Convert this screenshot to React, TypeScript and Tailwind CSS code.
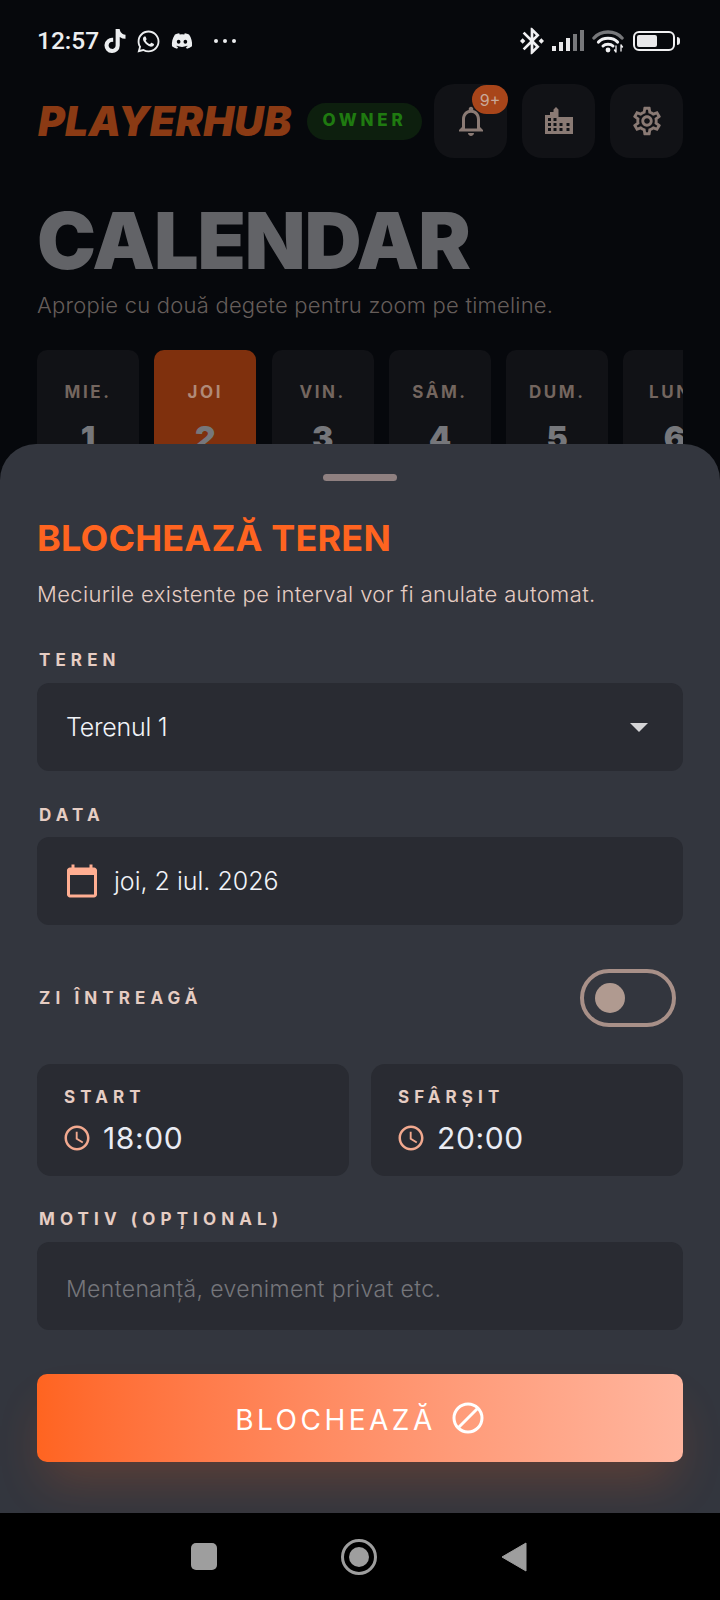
import { FaDiscord, FaTiktok, FaWhatsapp } from "react-icons/fa";
import {
  MdBluetoothConnected,
  MdCalendarToday,
  MdOutlineAccessTime,
  MdOutlineNotifications,
  MdOutlineSettings,
} from "react-icons/md";

const days = [
  { name: "MIE.", num: "1" },
  { name: "JOI", num: "2", active: true },
  { name: "VIN.", num: "3" },
  { name: "SÂM.", num: "4" },
  { name: "DUM.", num: "5" },
  { name: "LUN.", num: "6" },
];

function SignalIcon() {
  return (
    <svg width="32" height="22" viewBox="0 0 32 22">
      <rect x="0" y="16" width="4" height="5" fill="#e8e8ea" />
      <rect x="7" y="12" width="4" height="9" fill="#e8e8ea" />
      <rect x="14" y="8" width="4" height="13" fill="#e8e8ea" />
      <rect x="21" y="4" width="4" height="17" fill="#77787b" />
      <rect x="28" y="0" width="4" height="21" fill="#77787b" />
    </svg>
  );
}

function WifiIcon() {
  return (
    <svg width="32" height="24" viewBox="0 0 32 24" fill="none" strokeLinecap="round">
      <path d="M2 9 C 9 1, 23 1, 30 9" stroke="#77787b" strokeWidth="3.4" />
      <path d="M6.500 13 C 11 8, 21 8, 25.500 13" stroke="#f0f0f2" strokeWidth="3.2" />
      <path d="M11 17 C 13.500 14.500, 18.500 14.500, 21 17" stroke="#f0f0f2" strokeWidth="3" />
      <circle cx="16" cy="21" r="2.4" fill="#f0f0f2" />
      <path d="M24 17v6M22.500 21l1.500 2M29 16v6M29 16l1.500 2" stroke="#f0f0f2" strokeWidth="1.3" />
    </svg>
  );
}

function BatteryIcon() {
  return (
    <div className="flex items-center gap-[2px]">
      <div className="flex h-[20px] w-[42px] rounded-[6px] border-2 border-[#f0f0f2] p-[2px]">
        <div className="w-[20px] rounded-[2px] bg-[#e8e8ea]" />
      </div>
      <div className="h-[8px] w-[3px] rounded-r-sm bg-[#e8e8ea]" />
    </div>
  );
}

function CityIcon() {
  return (
    <svg width="30" height="30" viewBox="0 0 30 30">
      <path
        fillRule="evenodd"
        fill="#8a7a74"
        d="M1 28V9h5V6h3.500V3.500L12 1l2.500 2.500V11H29v17H1ZM4 12v3h3v-3H4Zm5.500 0v3h3v-3h-3Zm-5.500 5v3h3v-3H4Zm5.500 0v3h3v-3h-3Zm-5.500 5v3h3v-3H4Zm5.500 0v3h3v-3h-3Zm6-5v3h3v-3h-3Zm7 0v3h3v-3h-3Zm-7 5v3h3v-3h-3Zm7 0v3h3v-3h-3Z"
      />
    </svg>
  );
}

function BlockIcon() {
  return (
    <svg width="34" height="34" viewBox="0 0 34 34" fill="none" stroke="#fff" strokeWidth="3">
      <circle cx="17" cy="17" r="14" />
      <path d="M27 7 7 27" />
    </svg>
  );
}

function HeaderButton({ children }: { children: React.ReactNode }) {
  return (
    <div className="relative flex h-[74px] w-[73px] items-center justify-center rounded-[20px] bg-[#111216]">
      {children}
    </div>
  );
}

function FieldLabel({ text, className }: { text: string; className?: string }) {
  return (
    <div
      className={
        "text-[17px] leading-[20px] font-bold tracking-[0.3em] whitespace-nowrap text-[#e6cdc3] " +
        (className ?? "")
      }
    >
      {text}
    </div>
  );
}

function TimeCard({ label, value }: { label: string; value: string }) {
  return (
    <div className="flex h-[112px] flex-1 flex-col rounded-[14px] bg-[#292b32] pt-[23px] pl-[27px]">
      <FieldLabel text={label} />
      <div className="mt-[11px] flex items-center gap-[11px]">
        <MdOutlineAccessTime size={30} color="#f2a98f" className="-ml-[2px]" />
        <span className="text-[30px] leading-[40px] font-normal tracking-[0.02em] text-[#e9ecf4]">
          {value}
        </span>
      </div>
    </div>
  );
}

export default function App() {
  return (
    <div className="flex h-[1600px] w-[720px] flex-col overflow-hidden bg-black font-[Inter,sans-serif]">
      <div className="relative flex-1 overflow-hidden bg-[#06080c]">
        {/* status bar */}
        <div className="flex h-[84px] items-start justify-between pt-[25px] pr-[40px] pl-[37px]">
          <div className="flex h-[32px] items-center text-[#eceef0]">
            <span className="font-[Roboto,sans-serif] text-[24.5px] font-medium">12:57</span>
            <FaTiktok size={24} className="ml-[4px]" />
            <FaWhatsapp size={25} className="ml-[9px]" />
            <FaDiscord size={22} className="ml-[10px]" />
            <div className="ml-[21px] flex gap-[5px]">
              <span className="h-[4px] w-[4px] rounded-full bg-[#eceef0]" />
              <span className="h-[4px] w-[4px] rounded-full bg-[#eceef0]" />
              <span className="h-[4px] w-[4px] rounded-full bg-[#eceef0]" />
            </div>
          </div>
          <div className="flex h-[32px] items-center">
            <MdBluetoothConnected size={32} color="#f0f0f2" />
            <div className="ml-[4px]">
              <SignalIcon />
            </div>
            <div className="ml-[8px]">
              <WifiIcon />
            </div>
            <div className="ml-[9px]">
              <BatteryIcon />
            </div>
          </div>
        </div>

        {/* top bar */}
        <div className="flex items-center pr-[37px] pl-[38px]">
          <div className="text-[41px] leading-[74px] font-black tracking-[0.005em] text-[#8a3a14] italic">
            PLAYERHUB
          </div>
          <div className="ml-auto flex h-[37px] w-[115px] items-center justify-center rounded-full bg-[#0d1f0e] text-[17px] font-extrabold tracking-[0.22em] text-[#1f7a10]">
            OWNER
          </div>
          <div className="ml-[12px] flex gap-[15px]">
            <HeaderButton>
              <MdOutlineNotifications size={36} color="#8a7a74" />
              <div className="absolute top-[1px] -right-[1px] flex h-[29px] w-[36px] items-center justify-center rounded-full bg-[#a8451a] text-[16px] text-[#c9a99b]">
                9+
              </div>
            </HeaderButton>
            <HeaderButton>
              <CityIcon />
            </HeaderButton>
            <HeaderButton>
              <MdOutlineSettings size={34} color="#8a7a74" />
            </HeaderButton>
          </div>
        </div>

        <div className="px-[37px]">
          <h1 className="mt-[38px] text-[79px] leading-[88px] font-black tracking-[-0.014em] text-[#626367]">
            CALENDAR
          </h1>
          <p className="mt-[6px] text-[22px] leading-[30px] font-light tracking-[0.01em] text-[#655d5a]">
            Apropie cu două degete pentru zoom pe timeline.
          </p>
          {/* day strip, runs on under the sheet and off the right edge */}
          <div className="mt-[30px] flex gap-[15.3px] overflow-hidden">
            {days.map((d) => (
              <div
                key={d.num}
                className={
                  "flex h-[140px] w-[102px] shrink-0 flex-col items-center rounded-[10px] pt-[32px] " +
                  (d.active ? "bg-[#7f300d]" : "bg-[#111216]")
                }
              >
                <div
                  className={
                    "text-[17px] leading-[20px] font-bold tracking-[0.15em] " +
                    (d.active ? "text-[#b08a78]" : "text-[#74665f]")
                  }
                >
                  {d.name}
                </div>
                <div className="mt-[16px] text-[32px] leading-[40px] font-black text-[#76777b]">
                  {d.num}
                </div>
              </div>
            ))}
          </div>
        </div>

        {/* bottom sheet */}
        <div className="absolute inset-x-0 top-[444px] bottom-0 rounded-t-[36px] bg-[#33363e] px-[37px]">
          <div className="mx-auto mt-[30px] h-[7px] w-[74px] rounded-full bg-[#8f8080]" />
          <h2 className="mt-[37px] text-[36px] leading-[40px] font-bold tracking-[0.005em] text-[#ff6420]">
            BLOCHEAZĂ TEREN
          </h2>
          <p className="mt-[21px] text-[22px] leading-[30px] font-light tracking-[0.017em] text-[#e6cdc3]">
            Meciurile existente pe interval vor fi anulate automat.
          </p>

          <FieldLabel text="TEREN" className="mt-[41px] pl-[2px]" />
          <div className="mt-[13px] flex h-[88px] items-center justify-between rounded-[12px] bg-[#292b32] pr-[35px] pl-[29px]">
            <span className="pt-[1px] text-[25px] font-light tracking-[-0.01em] text-[#f1f3f8]">Terenul 1</span>
            <div className="h-0 w-0 border-x-[9px] border-t-[9px] border-x-transparent border-t-[#d4d4d6]" />
          </div>

          <FieldLabel text="DATA" className="mt-[34px] pl-[2px]" />
          <div className="mt-[12px] flex h-[88px] items-center rounded-[12px] bg-[#292b32] pl-[27px]">
            <MdCalendarToday size={36} color="#ffae92" />
            <span className="ml-[14px] pt-[1px] text-[25px] font-light text-[#f1f3f8]">joi, 2 iul. 2026</span>
          </div>

          <div className="mt-[44px] flex items-center justify-between pr-[7px] pl-[2px]">
            <FieldLabel text="ZI ÎNTREAGĂ" />
            <div className="flex h-[58px] w-[96px] items-center rounded-full border-4 border-[#a89088] pl-[11px]">
              <div className="h-[30px] w-[30px] rounded-full bg-[#b09a90]" />
            </div>
          </div>

          <div className="mt-[37px] flex gap-[22px]">
            <TimeCard label="START" value="18:00" />
            <TimeCard label="SFÂRȘIT" value="20:00" />
          </div>

          <FieldLabel text="MOTIV (OPȚIONAL)" className="mt-[33px] pl-[2px]" />
          <div className="mt-[13px] flex h-[88px] items-center rounded-[12px] bg-[#292b32] pl-[29px]">
            <span className="pt-[6px] text-[23px] font-light tracking-[0.016em] text-[#75767b]">
              Mentenanță, eveniment privat etc.
            </span>
          </div>

          <div className="mt-[44px] flex h-[88px] items-center justify-center gap-[15px] rounded-[10px] bg-gradient-to-r from-[#ff6420] to-[#ffb59e] shadow-[0_28px_48px_-8px_rgba(255,100,32,0.2)]">
            <span className="pt-[3px] text-[28px] font-normal tracking-[0.125em] text-white">BLOCHEAZĂ</span>
            <BlockIcon />
          </div>
        </div>
      </div>

      {/* android nav bar */}
      <div className="relative flex h-[87px] items-center bg-black">
        <div className="ml-[191px] h-[27px] w-[26px] rounded-[5px] bg-[#9e9e9e]" />
        <div className="ml-[124px] flex h-[36px] w-[36px] items-center justify-center rounded-full border-[3px] border-[#9e9e9e]">
          <div className="h-[20px] w-[20px] rounded-full bg-[#9e9e9e]" />
        </div>
        <svg className="ml-[124px]" width="26" height="30" viewBox="0 0 26 30">
          <path d="M25 1 1 15l24 14Z" fill="#9e9e9e" stroke="#9e9e9e" strokeLinejoin="round" />
        </svg>
      </div>
    </div>
  );
}
